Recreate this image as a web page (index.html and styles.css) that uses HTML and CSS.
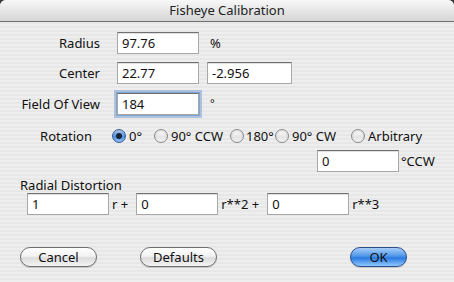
FILE: index.html
```html
<!DOCTYPE html>
<html>
<head>
    <meta charset="UTF-8">
    <title>Fisheye Calibration</title>
    <link rel="stylesheet" href="styles.css">
</head>
<body>
    <div class="window">
        <div class="titlebar">Fisheye Calibration</div>

        <div class="content">
            <div class="row first">
                <label class="lbl">Radius</label>
                <input class="field" value="97.76">
                <span class="unit">%</span>
            </div>

            <div class="row center">
                <label class="lbl">Center</label>
                <input class="field" value="22.77">
                <input class="field wide" value="-2.956">
            </div>

            <div class="row fov">
                <label class="lbl">Field Of View</label>
                <input class="field focus" value="184">
                <span class="unit deg">°</span>
            </div>

            <div class="row rotation">
                <span class="rot-lbl">Rotation</span>
                <div class="opt w42"><span class="radio on"></span>0°</div>
                <div class="opt w76"><span class="radio"></span>90° CCW</div>
                <div class="opt w45"><span class="radio"></span>180°</div>
                <div class="opt w76"><span class="radio"></span>90° CW</div>
                <div class="opt"><span class="radio"></span>Arbitrary</div>
            </div>

            <div class="row arbitrary">
                <input class="field" value="0">
                <span class="ccw">°CCW</span>
            </div>

            <div class="radial-lbl">Radial Distortion</div>
            <div class="row radial">
                <input class="field" value="1">
                <span class="term">r +</span>
                <input class="field" value="0">
                <span class="term">r**2 +</span>
                <input class="field" value="0">
                <span class="term">r**3</span>
            </div>

            <div class="buttons">
                <button class="btn">Cancel</button>
                <button class="btn defaults">Defaults</button>
                <button class="btn ok">OK</button>
            </div>
        </div>
    </div>
</body>
</html>
```

FILE: styles.css
```css
body {
    margin: 0;
    background: #3a3a3a;
    font-family: 'Noto Sans', 'DejaVu Sans', sans-serif;
    font-size: 13px;
    color: #111;
}

.window {
    width: 454px;
    height: 282px;
    border-radius: 6px 6px 0 0;
    overflow: hidden;
    background: repeating-linear-gradient(#eeeeee 0 2px, #e7e7e7 2px 4px);
}

.titlebar {
    height: 21px;
    line-height: 21px;
    text-align: center;
    color: #222;
    background: linear-gradient(#f8f8f8, #e6e6e6 50%, #d6d6d6);
    border-bottom: 1px solid #707070;
}

.content {
    padding-top: 10px;
}

.row {
    display: flex;
    align-items: center;
    height: 22px;
}

.center { margin-top: 8px; }
.fov { margin-top: 9px; }

.lbl {
    width: 100px;
    margin-right: 17px;
    text-align: right;
}

.field {
    box-sizing: border-box;
    flex-shrink: 0;
    width: 82px;
    height: 22px;
    padding: 0 4px;
    font: 13px 'Noto Sans', 'DejaVu Sans', sans-serif;
    color: #111;
    background: #fff;
    border: 1px solid #a8a8a8;
    border-top-color: #707070;
    box-shadow: inset 0 1px 0 #e0e0e0;
    outline: none;
}

.field.wide {
    width: 85px;
    margin-left: 8px;
}

.field.focus {
    box-shadow: 0 0 0 1px #7fa4d2, 0 0 0 3px rgba(120, 160, 210, 0.55);
}

.unit {
    margin-left: 11px;
}

.unit.deg {
    font-size: 11px;
    align-self: flex-start;
    margin-top: 2px;
}

/* rotation radios */
.rotation {
    margin-top: 10px;
}

.rot-lbl {
    width: 92px;
    margin-right: 20px;
    text-align: right;
}

.opt {
    display: flex;
    flex-shrink: 0;
    align-items: center;
    gap: 3px;
    white-space: nowrap;
}

.w42 { width: 42px; }
.w76 { width: 76px; }
.w45 { width: 45px; gap: 2px; }

.radio {
    position: relative;
    box-sizing: border-box;
    flex-shrink: 0;
    width: 14px;
    height: 14px;
    border-radius: 50%;
    border: 1px solid #8a8a8a;
    background: linear-gradient(#fdfdfd, #e4e4e4 60%, #f4f4f4);
    box-shadow: inset 0 1px 2px rgba(0, 0, 0, 0.15);
}

.radio.on {
    border-color: #3b5e95;
    background: linear-gradient(#b8d6f7, #4b92e4 55%, #8cc2f6);
}

.radio.on::after {
    content: "";
    position: absolute;
    left: 3px;
    top: 3px;
    width: 6px;
    height: 6px;
    border-radius: 50%;
    background: #1b2233;
}

.arbitrary {
    margin-top: 3px;
    padding-left: 317px;
}

.ccw {
    margin-left: 2px;
}

/* radial distortion */
.radial-lbl {
    margin-top: 5px;
    padding-left: 20px;
    line-height: 16px;
}

.radial {
    padding-left: 27px;
}

.term {
    margin: 0 8px 0 3px;
}

/* bottom buttons */
.buttons {
    display: flex;
    margin-top: 32px;
    padding: 0 47px 0 20px;
}

.btn {
    box-sizing: border-box;
    width: 77px;
    height: 20px;
    padding: 0;
    font: 13px 'Noto Sans', 'DejaVu Sans', sans-serif;
    color: #111;
    border: 1px solid #6e6e6e;
    border-radius: 10px;
    background: linear-gradient(#ffffff, #f2f2f2 45%, #dcdcdc 55%, #f4f4f4);
    box-shadow: 0 1px 1px rgba(0, 0, 0, 0.15);
}

.btn.defaults {
    margin-left: 43px;
}

.btn.ok {
    width: 57px;
    margin-left: auto;
    border-color: #2b4f8c;
    background: linear-gradient(#a6cdf6, #4f97ea 45%, #2a7ae0 55%, #8fc8ff);
}
```
